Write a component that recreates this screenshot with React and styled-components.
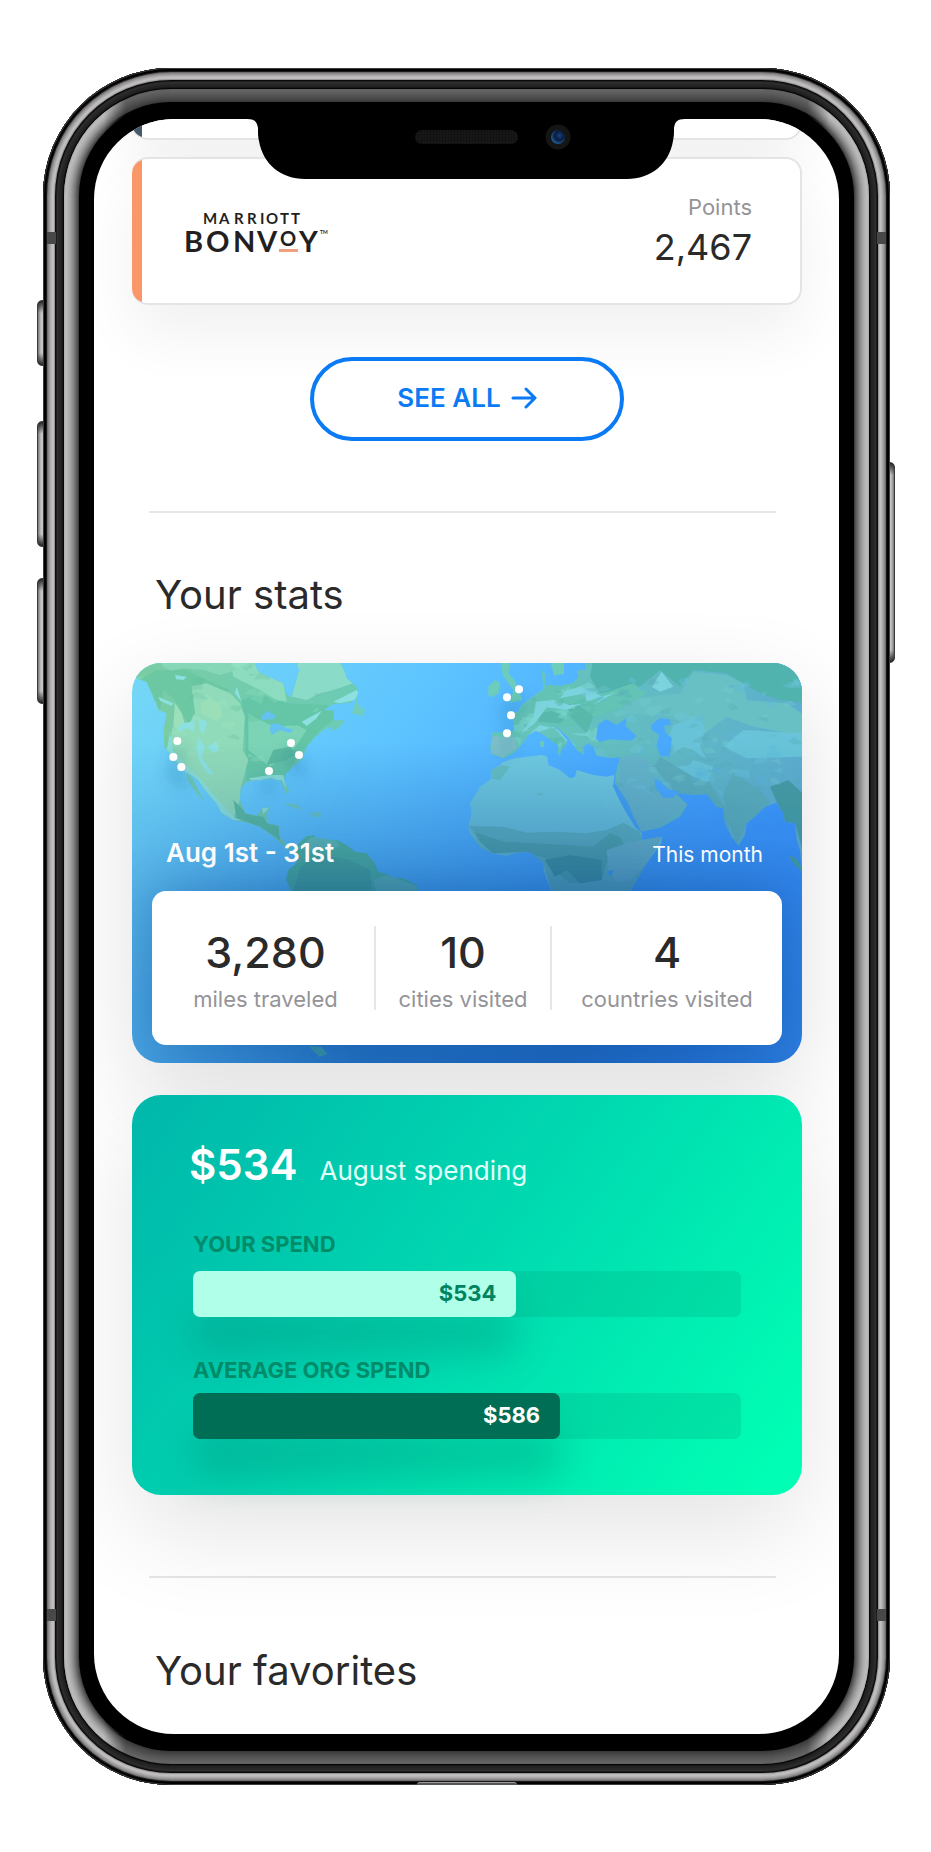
import React from "react";
import styled, { createGlobalStyle } from "styled-components";

const GlobalStyle = createGlobalStyle`
  * { box-sizing: border-box; }
  body {
    margin: 0;
    background: #fff;
    color: #2a2a2b;
    font-family: Inter, "Liberation Sans", sans-serif;
  }
`;

/* ---------- phone ---------- */

const rings = (colors, start = 0) =>
  colors.map((c, i) => `inset 0 0 0 ${start + i + 1}px ${c}`).join(", ");

const steel = [
  "#3c3c3c", "#000", "#000", "#1a1a1a", "#6e6c6d", "#8a8889", "#9b999a",
  "#aba9aa", "#b8b6b7", "#c1bfc0", "#bbb9ba", "#989697", "#0a0a0a", "#1c1c1c",
  "#303030", "#2a2a2a", "#272727", "#242424", "#222", "#171717", "#060606",
  "#5f605f", "#626362", "#606160", "#5d5e5d", "#5a5b5a", "#575857",
  "#535453", "#505150", "#4c4d4c", "#484948", "#444544", "#3f403f", "#393a39",
  "#000",
];

const glare = [
  "#b0b0b0", "#bababa", "#bababa", "#b6b6b6", "#b0b0b0", "#aaaaaa", "#a2a2a2",
  "#999", "#8f8f8f", "#858585", "#797979", "#6c6c6c", "#5f5f5f", "#525252",
  "#404040",
];

const Stage = styled.main`
  padding: 68px 41px 68px 43px;
`;

const Phone = styled.div`
  position: relative;
  padding: 51px;
  border-radius: 128px;
  background: #000;
  box-shadow: ${rings(steel)};

  &::before {
    content: "";
    position: absolute;
    inset: 21px;
    border-radius: 107px;
    box-shadow: ${rings(glare)};
    mask-image: linear-gradient(
      90deg,
      #000 40px,
      transparent 62px,
      transparent calc(100% - 62px),
      #000 calc(100% - 40px)
    );
  }
`;

const SideKey = styled.span`
  position: absolute;
  z-index: -1;
  top: ${(p) => p.$top}px;
  ${(p) => p.$side}: ${(p) => (p.$side === "left" ? -6 : -5)}px;
  width: 12px;
  height: ${(p) => p.$length}px;
  border-radius: 5px;
  border: 1px solid #3a3a3a;
  background:
    linear-gradient(#222, transparent 12px, transparent calc(100% - 12px), #222),
    linear-gradient(90deg, #777, #c4c4c4 3px, #c4c4c4 7px, #777);
`;

const Antenna = styled.span`
  position: absolute;
  ${(p) => p.$side}: 4px;
  ${(p) => p.$edge}: 164px;
  width: 9px;
  height: 12px;
  background: #484848;
`;

const Port = styled.span`
  position: absolute;
  left: calc(50% - 50px);
  bottom: 0;
  width: 100px;
  height: 3px;
  border-radius: 4px 4px 0 0;
  background: #555;
  border-top: 1px solid #999;
`;

const Screen = styled.div`
  position: relative;
  overflow: hidden;
  padding: 0 37px 38px 38px;
  border-radius: 80px;
  background: #fff;
`;

const NotchArt = styled.svg`
  position: absolute;
  z-index: 2;
  top: 0;
  left: calc(50% - 220px);
  width: 438px;
  height: 60px;
`;

function Notch() {
  return (
    <NotchArt viewBox="0 0 438 60" aria-hidden="true">
      <defs>
        <pattern id="mesh" width="3" height="3" patternUnits="userSpaceOnUse">
          <rect width="3" height="3" fill="#161616" />
          <rect width="1" height="1" fill="#0a0a0a" />
        </pattern>
        <radialGradient id="lens" cx="0.6" cy="0.4" r="0.6">
          <stop offset="0" stopColor="#16437c" />
          <stop offset="0.55" stopColor="#0b1a3c" />
          <stop offset="1" stopColor="#1d5c96" />
        </radialGradient>
      </defs>
      <path d="M0-1V0C8 0 10 3 11 9C11 16 11 17 12 22C16 45 34 60 58 60H380C404 60 422 45 426 22C427 17 427 16 427 9C428 3 430 0 438 0V-1Z" />
      <rect x="168" y="11" width="103" height="14" rx="7" fill="url(#mesh)" />
      <circle cx="311" cy="18" r="12.5" fill="#151515" />
      <circle cx="311" cy="18" r="7" fill="url(#lens)" />
    </NotchArt>
  );
}

/* ---------- loyalty cards ---------- */

const ProgramList = styled.ul`
  display: flex;
  flex-direction: column;
  gap: 17px;
  margin: -127px 0 0;
  padding: 0;
  list-style: none;
`;

const ProgramCard = styled.li`
  position: relative;
  display: flex;
  align-items: flex-start;
  justify-content: space-between;
  height: 148px;
  padding: 35px 48px 0 41px;
  border: 2px solid #e3e4e4;
  border-left: 0;
  border-radius: 16px;
  background: linear-gradient(90deg, ${(p) => p.$accent} 10px, #fff 10px);
  box-shadow: 0 30px 60px rgba(0, 0, 0, 0.06);
`;

const BonvoyLogo = styled.svg`
  width: 154px;
  height: 56px;
  margin: 8px 0 0 9px;
  font-family: Lato, Inter, sans-serif;
  font-weight: 700;
  fill: #231f20;
`;

const Points = styled.div`
  text-align: right;
`;

const PointsLabel = styled.div`
  font-size: 22px;
  line-height: 26px;
  color: #949498;
`;

const PointsValue = styled.div`
  font-size: 36px;
  line-height: 54px;
`;

const SeeAllButton = styled.button`
  display: flex;
  align-items: center;
  justify-content: center;
  gap: 10px;
  width: 314px;
  height: 84px;
  margin: 52px auto 0;
  padding: 0 0 2px;
  border: 4px solid #0a7bf4;
  border-radius: 42px;
  background: #fff;
  color: #0a7bf4;
  font: 600 26px/30px Inter, "Liberation Sans", sans-serif;
  position: relative;
`;

const Divider = styled.hr`
  height: 2px;
  margin: ${(p) => p.$gap}px 26px 0 17px;
  border: 0;
  background: #e6e6e8;
`;

const SectionTitle = styled.h2`
  margin: ${(p) => p.$gap}px 0 0 23px;
  font-size: 40px;
  font-weight: 400;
  line-height: 50px;
`;

/* ---------- travel map ---------- */

const Panel = styled.section`
  position: relative;
  height: 400px;
  border-radius: 29px;
`;

const MapPanel = styled(Panel)`
  display: flex;
  flex-direction: column;
  justify-content: flex-end;
  padding: 0 20px 18px;
  overflow: hidden;
  isolation: isolate;
`;

const MapShade = styled.div`
  margin-top: 43px;
  border-radius: 29px;
  box-shadow: 0 30px 90px rgba(0, 0, 0, 0.12);
`;

const MapArt = styled.svg`
  position: absolute;
  z-index: -1;
  inset: 0;
  width: 100%;
  height: 100%;
`;

const MapCaption = styled.div`
  display: flex;
  align-items: baseline;
  justify-content: space-between;
  margin-bottom: 21px;
  padding: 0 19px 0 14px;
  color: #fff;
  font-size: 21px;
  line-height: 30px;
`;

const Period = styled.strong`
  font-size: 26px;
  font-weight: 600;
`;

const StatsCard = styled.dl`
  display: grid;
  grid-template-columns: 217fr 176fr 232fr;
  margin: 0;
  padding: 35px 0 35px 5px;
  border-radius: 14px;
  background: #fff;
  box-shadow: 0 0 50px rgba(8, 60, 130, 0.3);
`;

const Stat = styled.div`
  display: flex;
  flex-direction: column-reverse;
  align-items: center;
  gap: 10px;
  height: 84px;

  & + & {
    border-left: 2px solid #e6e6e8;
  }
`;

const StatLabel = styled.dt`
  font-size: 22px;
  line-height: 22px;
  color: #949498;
`;

const StatValue = styled.dd`
  margin: 0;
  font-size: 43px;
  font-weight: 500;
  line-height: 52px;
`;

const westDots = [[172, 273], [160, 321], [184, 351], [447, 363], [513, 279], [537, 315]];
const eastDots = [[177, 118], [141, 142], [153, 196], [141, 250]];

/* Deterministic relief shards scattered over a region of land. */
const shards = (count, seed, x0, y0, w, h) => {
  let s = seed;
  const next = () => {
    s = (s * 16807) % 2147483647;
    return s / 2147483647;
  };
  return Array.from({ length: count }, () => {
    const x = x0 + next() * w;
    const y = y0 + next() * h;
    const r = 8 + next() * 20;
    return Array.from({ length: 5 }, (_, i) => {
      const a = (i / 5) * 6.28 + next();
      const d = r * (0.3 + next());
      return `${Math.round(x + Math.cos(a) * d * 1.2)},${Math.round(y + Math.sin(a) * d * 0.7)}`;
    }).join(" ");
  });
};

const northAmerica =
  "M30 30H400L415 65L455 85L490 100L498 130L512 142L522 112L530 85L538 60L525 30H655L672 60L680 85L710 110L715 125L710 145L690 158L640 163L610 180L642 182L640 210L676 212L655 235L630 244L638 228L610 240L585 262L560 290L548 325L520 350L498 370L492 390L507 422L502 433L490 415L485 395L455 385L420 390L385 392L362 415L360 450L375 490L410 498L425 475L448 472L440 500L445 520L478 528L480 560L500 585L520 590L505 600L485 582L460 560L420 530L375 517L340 510L305 490L290 460L255 420L235 390L215 375L195 365L150 310L133 290L130 240L140 190L115 180L100 140L80 95L50 85Z";
const southAmerica =
  "M525 590L560 558L582 556L590 570L650 570L680 585L705 605L740 610L765 640L775 665L800 672L820 685L850 685L890 705L893 735H520L498 690L505 660L530 640Z";
const eurasia =
  "M245 60L258 75L254 108L272 104L300 108L340 98L355 80L350 62L378 58V30H1040V680L1025 660L1020 600L1010 570L1005 520L975 515L970 490L950 458L915 470L890 495L860 520L855 555L835 588L815 560L795 520L790 475L770 470L740 432L700 434L655 430L640 420L650 432L682 464L660 500L600 533L543 545L520 500L500 460L466 400L467 372L480 322L455 324L410 318L400 290L385 280L370 290L372 315L350 300L330 268L300 240L282 224L322 272L318 285L303 302L300 320L292 305L296 288L265 265L240 248L228 242L205 255L185 285L160 310L130 325L95 312L90 290L98 258L95 248L150 245L162 240L160 205L148 188L175 185L185 165L225 135L250 118Z";
const africa =
  "M130 335L165 325L245 315L262 320L265 345L300 360L330 385L345 380L350 360L400 375L440 380L463 375L460 403L490 470L520 515L545 550V570L606 560L604 580L560 640L510 690L505 735H280L260 690L250 660L253 625L210 605L170 608L140 618L100 610L60 590L30 550L25 525L35 490L30 460L60 410L92 388L95 360L120 345Z";

function WorldMap() {
  return (
    <MapArt viewBox="0 0 671 400" preserveAspectRatio="xMidYMid slice" role="img" aria-label="Cities visited in August">
      <defs>
        <linearGradient id="sea" x1="0" y1="0.1" x2="1" y2="0.5">
          <stop offset="0" stopColor="#73d6f6" />
          <stop offset="0.38" stopColor="#5dc3ff" />
          <stop offset="0.72" stopColor="#47a6ff" />
          <stop offset="1" stopColor="#3a92fb" />
        </linearGradient>
        <linearGradient id="depth" x1="0" y1="0" x2="0" y2="1">
          <stop offset="0.2" stopColor="#0a4a9c" stopOpacity="0" />
          <stop offset="0.6" stopColor="#0a4a9c" stopOpacity="0.42" />
          <stop offset="1" stopColor="#0a4a9c" stopOpacity="0.64" />
        </linearGradient>
        <radialGradient id="edge" cx="0.5" cy="0.5" r="0.5">
          <stop offset="0.4" stopColor="#fff" />
          <stop offset="1" stopColor="#555" />
        </radialGradient>
        <mask id="edgeMask">
          <rect x="-80" y="-200" width="831" height="900" fill="url(#edge)" />
        </mask>
        <linearGradient id="west" x1="0" y1="0" x2="1" y2="0">
          <stop offset="0" stopColor="#7acda4" />
          <stop offset="1" stopColor="#6bcbb4" />
        </linearGradient>
        <linearGradient id="east" x1="0" y1="0" x2="1" y2="0">
          <stop offset="0" stopColor="#68c9b6" />
          <stop offset="1" stopColor="#5cadcf" />
        </linearGradient>
        <linearGradient id="sahara" x1="0" y1="0" x2="0" y2="1">
          <stop offset="0" stopColor="#70cbe0" />
          <stop offset="1" stopColor="#68bfd6" />
        </linearGradient>
        <filter id="pinShadow" x="-200%" y="-200%" width="500%" height="500%">
          <feDropShadow dx="0" dy="14" stdDeviation="8" floodColor="#05507a" floodOpacity="0.7" />
        </filter>
        <clipPath id="westLand"><path d={northAmerica} /></clipPath>
        <clipPath id="eastLand"><path d={eurasia} /></clipPath>
      </defs>

      <rect width="671" height="400" fill="url(#sea)" />

      <g transform="translate(-11.5 -13) scale(0.33333)">
        <path d={northAmerica} fill="url(#west)" />
        <g clipPath="url(#westLand)">
          <path fill="#6cc7a3" d="M60 90L110 60L200 60L260 90L330 120L300 140L215 105L228 190L205 222L185 185L165 150L130 120L120 180L90 120Z" />
          <path fill="#64c6a6" d="M365 150L420 130L500 160L620 165L645 180L640 210L600 240L560 290L520 340L495 385L380 395L375 250Z" />
          <path fill="#8cddc0" d="M330 30H400L415 65L490 100L500 155L470 150L420 120L340 80Z" />
          <path fill="#8adcc8" d="M535 30H665L700 100L640 120L600 130L560 150L515 140L530 85Z" />
          <path fill="#90dbb9" d="M215 108L260 100L330 130L360 160L375 200L368 300L385 330L362 415L360 450L340 505L300 480L250 410L200 360L150 280L158 230L205 225L225 190Z" />
          <path fill="#9bdfb8" d="M240 160L270 145L300 165L308 200L290 215L245 190Z" />
          <path fill="#9bdfbb" d="M165 160L185 190L195 225L175 245L160 225Z" />
          <path fill="#86d6b8" d="M110 30H320L350 60L300 75L250 60L190 55L150 62Z" />
          <path fill="#7bd4b6" d="M385 190L460 230L530 225L560 240L520 300L450 350L385 300Z" />
          <path fill="#5cbba0" d="M460 300L510 290L530 310L500 330L440 345ZM340 450L380 490L430 500L440 520L475 528L480 570L420 530L350 505Z" />
          <path fill="#8ce0e0" d="M172 235L185 220L215 215L225 203L222 245L200 235L180 245ZM235 205L262 215L250 255L240 240ZM235 260L255 290L245 325L285 375L262 370L240 335L228 300ZM262 290L290 275L298 300L280 310ZM115 140L160 160L155 168L120 152ZM350 110L365 155L345 130ZM165 75L200 80L190 90L168 88ZM640 155L710 120L715 128L705 150L660 160ZM545 215L605 182L590 205L560 228Z" />
          <path fill="#64c2f1" d="M422 202L440 182L470 198L462 207L428 210ZM452 222L470 220L485 225L500 235L520 238L510 250L480 240L455 255L450 240Z" />
          <path fill="#8ce0d8" d="M150 250L160 300L200 350L240 385L290 445L345 505L365 510L340 512L290 480L240 400L180 355L140 300ZM385 385L450 375L490 375L500 420L485 390L400 395ZM425 475L448 472L430 492Z" />
          {shards(46, 77, 60, 40, 560, 340).map((d, i) => (
            <polygon key={d} points={d} fill={["#8fe0c3", "#62c09c", "#a0e5c4"][i % 3]} opacity="0.28" />
          ))}
        </g>
        <path fill="#72cdb2" d="M196 368L218 385L253 456L235 436L210 402Z" />
        <path fill="#71cdbd" d="M695 190L710 146L718 170L735 180L728 198Z" />
        <path fill="#6cc8c4" d="M490 458L530 462L550 480L520 474ZM568 488L600 486L606 500L580 502Z" />
        <path fill="#56bd9c" d={southAmerica} />
        <path fill="#69c4b4" d="M535 595L575 560L650 572L660 590L600 600L560 600ZM760 690L800 675L890 708L890 730H770Z" />
        <path fill="#50b195" d="M540 650L600 615L690 630L750 660L755 730H520Z" />
      </g>

      <g transform="translate(328.5 -13) scale(0.33333)">
        <path fill="#6ccdbb" d="M122 30L150 38L145 70L165 92L180 130L187 150L150 158L160 120L128 75ZM85 135L85 110L105 90L120 100L115 130L95 142ZM270 30H312V72L282 76ZM240 275L250 272L252 292L242 290Z" />
        <path d={eurasia} fill="url(#east)" />
        <g clipPath="url(#eastLand)">
          <path fill="#50b3ae" d="M400 30H1040V160L960 150L900 130L800 70L700 60L660 110L600 60L540 110L420 130L390 80Z" />
          <path fill="#68c0c4" d="M660 130L700 65L800 75L850 100L860 150L980 160L1040 200V260L880 230L800 200L720 260L640 200L500 190L480 150Z" />
          <path fill="#63c3b4" d="M160 200L260 110L350 100L400 140L520 100L560 130L480 175L380 210L330 230L240 220L180 250Z" />
          <path fill="#58b8ac" d="M240 190L290 180L320 200L300 220L235 215ZM300 165L350 160L400 200L380 250L350 220Z" />
          <path fill="#7bd3de" d="M228 155L280 150L330 165L380 160L375 130L300 145L315 122L360 110L430 140L400 165L470 125L380 155L320 180L260 172L225 220L180 255L220 200ZM585 95L605 65L640 110L600 125L575 110ZM205 255L240 225L300 240L350 290L320 275L280 230L240 245Z" />
          <path fill="#68c3d8" d="M640 225L680 210L720 205L735 240L720 290L740 330L700 300L670 290L640 310L625 260ZM790 290L850 240L1040 250V320L860 325ZM700 330L760 350L740 400L690 380L640 350L690 345Z" />
          <path fill="#66b5c9" d="M480 325L530 312L580 345L585 400L640 445L682 464L600 530L545 545L480 430Z" />
          <path fill="#5caebb" d="M600 320L700 380L750 400L800 480L810 560L830 588L700 434L650 430L580 350ZM820 370L900 420L930 460L860 520L830 580L800 500L790 430Z" />
          <path fill="#469da3" d="M930 410L985 390L1040 440V640L1005 520L975 515L950 455Z" />
          <path fill="#7fc2cb" d="M90 258L165 262L170 295L130 322L95 310Z" />
          {shards(110, 913, 380, 90, 650, 340).map((d, i) => (
            <polygon key={d} points={d} fill={["#6ec7e2", "#5aacb9", "#72cbd0", "#5cb8dc"][i % 4]} opacity="0.35" />
          ))}
          {shards(30, 402, 170, 100, 240, 190).map((d, i) => (
            <polygon key={d} points={d} fill={["#7ed9d6", "#58bbaa"][i % 2]} opacity="0.5" />
          ))}
        </g>
        <path fill="#4aa9fd" d="M408 265L415 222L440 208L470 225L500 204L497 228L530 258L515 272L450 268L420 276ZM573 225L600 205L630 208L632 225L612 228L618 250L636 264L628 320L600 317L590 285L598 255L575 240ZM583 388L600 393L625 418L655 424L640 443L612 445L588 415Z" />
        <path d={africa} fill="url(#sahara)" />
        <path fill="#60b4be" d="M28 528L130 530L200 548L280 545L380 550L440 540L490 518L540 545L545 570L606 560L560 640L505 735H280L250 640L210 605L100 610L60 590Z" />
        <path fill="#54a9aa" d="M40 545L130 575L220 580L320 585L400 590L450 550L480 560L500 600L440 640L425 690L330 700L280 660L255 625L200 605L100 610L60 590Z" />
        <path fill="#45999c" d="M255 630L330 615L425 630L425 690L360 700L320 660L285 680Z" />
        <path fill="#6cb7c9" d="M440 600L500 580L545 570L604 562L560 640L510 690L470 700L445 660Z" />
        <path fill="#67bfc2" d="M95 385L95 360L125 345L150 350L120 390ZM25 528L60 590L100 612L60 575L40 540ZM230 430H250L240 438Z" />
        <path fill="#46a3f4" d="M457 404L468 404L505 460L520 500L545 548L525 530L500 490L478 450ZM440 665L460 660L455 680Z" />
        <path fill="#46a3a3" d="M985 615L1010 625L1040 680L1000 640Z" />
      </g>

      <rect width="671" height="400" fill="url(#depth)" mask="url(#edgeMask)" />
      <path fill="#3590a8" d="M177 383L190 384L196 391L188 394Z" />

      <g fill="#fff" filter="url(#pinShadow)">
        {westDots.map(([x, y]) => (
          <circle key={x} cx={x / 3 - 11.5} cy={y / 3 - 13} r="4" />
        ))}
        {eastDots.map(([x, y]) => (
          <circle key={y} cx={x / 3 + 328.5} cy={y / 3 - 13} r="4" />
        ))}
      </g>
    </MapArt>
  );
}

/* ---------- spending ---------- */

const SpendPanel = styled(Panel)`
  margin-top: 32px;
  padding: 44px 61px 0 61px;
  background: linear-gradient(126deg, #00b7ab, #00d5b0 44%, #00ffb4 96%);
  box-shadow: 0 36px 100px rgba(0, 0, 0, 0.11);
`;

const SpendHeader = styled.div`
  display: flex;
  align-items: baseline;
  gap: 22px;
  margin-left: -4px;
  color: #fff;
`;

const SpendTotal = styled.strong`
  font-size: 42px;
  font-weight: 600;
  line-height: 52px;
`;

const SpendCaption = styled.span`
  font-size: 26px;
  color: #e2fff8;
`;

const BarGroup = styled.div`
  margin-top: ${(p) => p.$gap}px;
`;

const BarLabel = styled.div`
  color: #008b69;
  font-size: 22px;
  font-weight: 700;
  line-height: 26px;
`;

const BarTrack = styled.div`
  height: 46px;
  margin-top: ${(p) => p.$gap}px;
  border-radius: 7px;
  background: rgba(0, 150, 110, 0.2);
`;

const BarFill = styled.div`
  display: flex;
  align-items: center;
  justify-content: flex-end;
  height: 46px;
  padding: 0 20px 2px 0;
  border-radius: 7px;
  background: ${(p) => (p.$dark ? "#006e54" : "#b0ffe9")};
  color: ${(p) => (p.$dark ? "#fff" : "#008361")};
  box-shadow: 0 38px 36px rgba(0, 130, 110, 0.3);
  font-size: 22px;
  font-weight: 700;
`;

function SpendBar({ label, amount, share, dark, gap, labelGap }) {
  return (
    <BarGroup $gap={gap}>
      <BarLabel>{label}</BarLabel>
      <BarTrack $gap={labelGap}>
        <BarFill $dark={dark} style={{ width: `${share}%` }}>{amount}</BarFill>
      </BarTrack>
    </BarGroup>
  );
}

export default function App() {
  return (
    <Stage>
      <GlobalStyle />
      <Phone>
        <SideKey $side="left" $top={232} $length={66} />
        <SideKey $side="left" $top={353} $length={126} />
        <SideKey $side="left" $top={510} $length={126} />
        <SideKey $side="right" $top={394} $length={201} />
        <Antenna $side="left" $edge="top" />
        <Antenna $side="right" $edge="top" />
        <Antenna $side="left" $edge="bottom" />
        <Antenna $side="right" $edge="bottom" />
        <Port />
        <Screen>
          <Notch />
          <ProgramList>
            <ProgramCard $accent="#45596a" />
            <ProgramCard $accent="#fa9768">
              <BonvoyLogo viewBox="0 -8 154 56" role="img" aria-label="Marriott Bonvoy">
                <text y="14" fontSize="15" x="21 37 52 65 78 84 98 109">MARRIOTT</text>
                <text y="42" fontSize="29" x="2 24 51 75">BONV</text>
                <text y="36" fontSize="20" x="98">O</text>
                <text y="42" fontSize="29" x="117">Y</text>
                <text y="24" fontSize="5" x="138">TM</text>
                <rect x="97" y="39" width="19" height="3" fill="#f0a07c" />
              </BonvoyLogo>
              <Points>
                <PointsLabel>Points</PointsLabel>
                <PointsValue>2,467</PointsValue>
              </Points>
            </ProgramCard>
          </ProgramList>

          <SeeAllButton type="button">
            SEE ALL
            <svg width="26" height="24" viewBox="0 0 26 24" fill="none" stroke="currentColor" strokeWidth="3" strokeLinecap="round" strokeLinejoin="round" aria-hidden="true">
              <path d="M2 12H24M15 3L24 12L15 21" />
            </svg>
          </SeeAllButton>

          <Divider $gap={70} />
          <SectionTitle $gap={57}>Your stats</SectionTitle>

          <MapShade>
            <MapPanel>
              <WorldMap />
              <MapCaption>
                <Period>Aug 1st - 31st</Period>
                <span>This month</span>
              </MapCaption>
              <StatsCard>
                <Stat>
                  <StatLabel>miles traveled</StatLabel>
                  <StatValue>3,280</StatValue>
                </Stat>
                <Stat>
                  <StatLabel>cities visited</StatLabel>
                  <StatValue>10</StatValue>
                </Stat>
                <Stat>
                  <StatLabel>countries visited</StatLabel>
                  <StatValue>4</StatValue>
                </Stat>
              </StatsCard>
            </MapPanel>
          </MapShade>

          <SpendPanel>
            <SpendHeader>
              <SpendTotal>$534</SpendTotal>
              <SpendCaption>August spending</SpendCaption>
            </SpendHeader>
            <SpendBar label="YOUR SPEND" amount="$534" share={59} gap={40} labelGap={14} />
            <SpendBar label="AVERAGE ORG SPEND" amount="$586" share={67} gap={40} labelGap={10} dark />
          </SpendPanel>

          <Divider $gap={81} />
          <SectionTitle $gap={68}>Your favorites</SectionTitle>
        </Screen>
      </Phone>
    </Stage>
  );
}
